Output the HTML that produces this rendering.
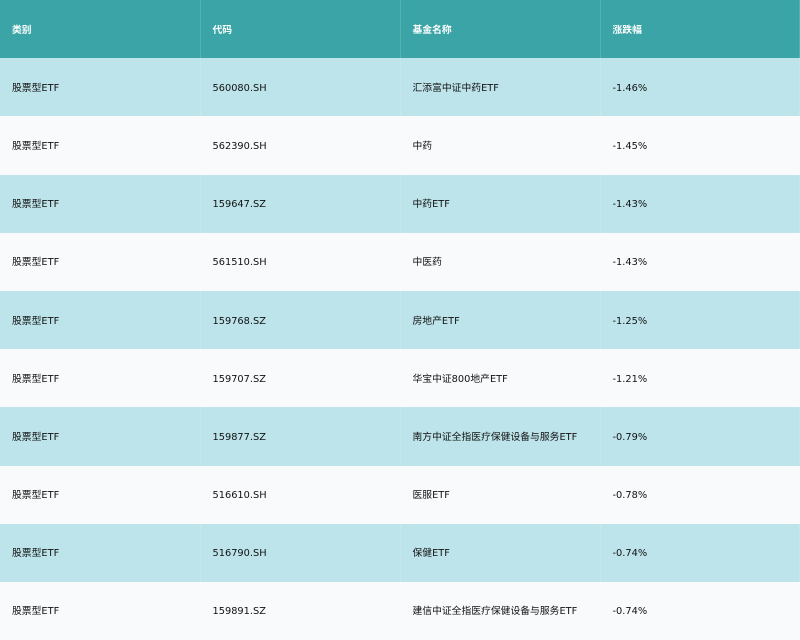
<!DOCTYPE html>
<html><head><meta charset="utf-8"><style>
body{margin:0;width:800px;height:640px;overflow:hidden;background:#f8fafc;font-family:"DejaVu Sans","Noto Sans CJK SC",sans-serif;font-size:9.8px;color:#111}
table{border-collapse:collapse;width:800px;table-layout:fixed}
td,th{height:58.2px;padding:3px 0 0 12px;text-align:left;border-right:1px solid rgba(255,255,255,0.15);box-sizing:border-box;vertical-align:middle;line-height:12px}
th{background:#3aa4a6;color:#fff;font-weight:bold;font-size:9.8px}
tr.a td{background:#bde4ea}
tr.b td{background:#f8fafc}
</style></head><body>
<table>
<tr><th style="width:200px">类别</th><th style="width:200px">代码</th><th style="width:200px">基金名称</th><th>涨跌幅</th></tr>
<tr class="a"><td>股票型ETF</td><td>560080.SH</td><td>汇添富中证中药ETF</td><td>-1.46%</td></tr>
<tr class="b"><td>股票型ETF</td><td>562390.SH</td><td>中药</td><td>-1.45%</td></tr>
<tr class="a"><td>股票型ETF</td><td>159647.SZ</td><td>中药ETF</td><td>-1.43%</td></tr>
<tr class="b"><td>股票型ETF</td><td>561510.SH</td><td>中医药</td><td>-1.43%</td></tr>
<tr class="a"><td>股票型ETF</td><td>159768.SZ</td><td>房地产ETF</td><td>-1.25%</td></tr>
<tr class="b"><td>股票型ETF</td><td>159707.SZ</td><td>华宝中证800地产ETF</td><td>-1.21%</td></tr>
<tr class="a"><td>股票型ETF</td><td>159877.SZ</td><td>南方中证全指医疗保健设备与服务ETF</td><td>-0.79%</td></tr>
<tr class="b"><td>股票型ETF</td><td>516610.SH</td><td>医服ETF</td><td>-0.78%</td></tr>
<tr class="a"><td>股票型ETF</td><td>516790.SH</td><td>保健ETF</td><td>-0.74%</td></tr>
<tr class="b"><td>股票型ETF</td><td>159891.SZ</td><td>建信中证全指医疗保健设备与服务ETF</td><td>-0.74%</td></tr>
</table>
</body></html>
